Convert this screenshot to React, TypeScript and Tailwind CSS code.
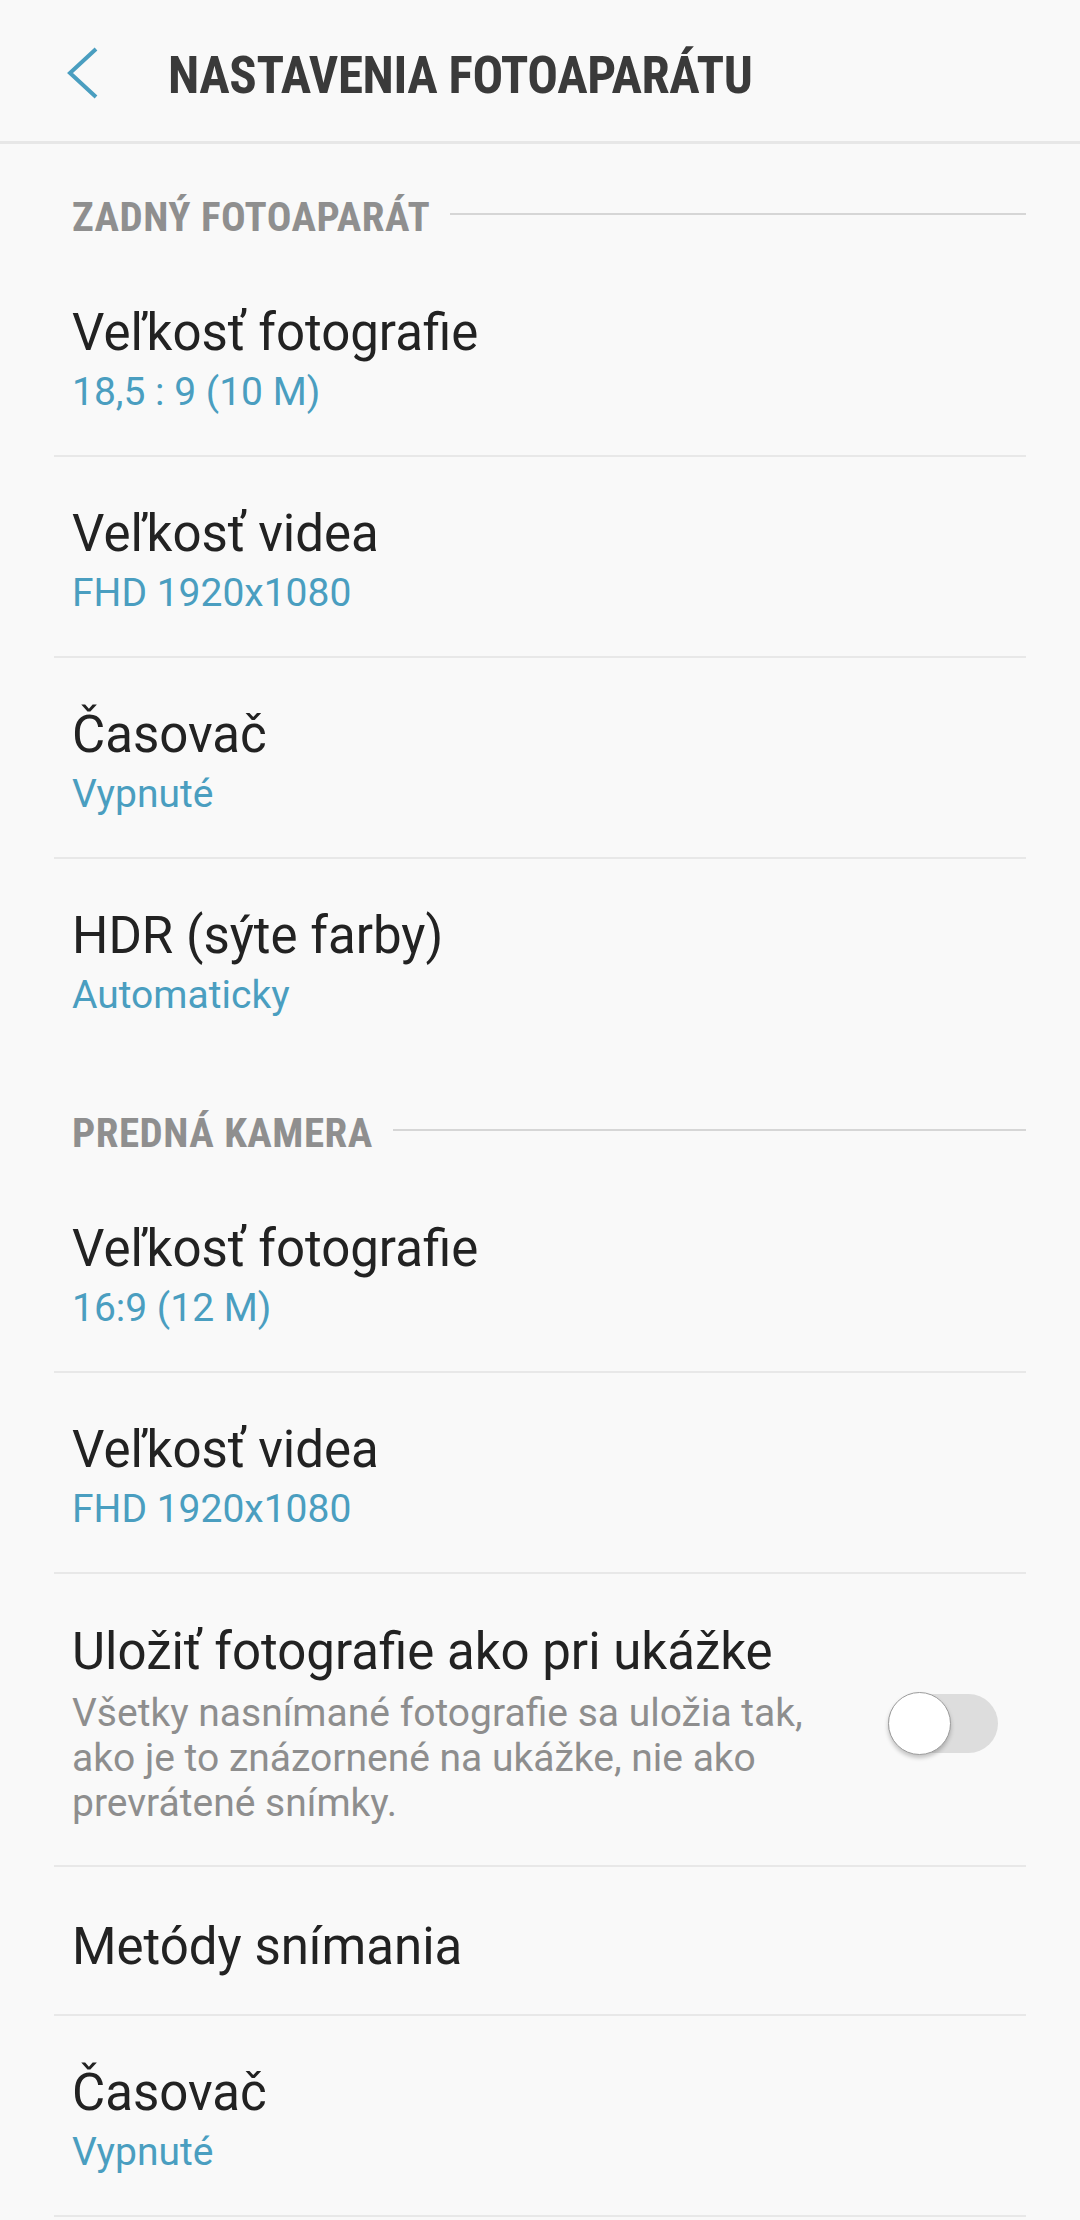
import React from "react";

type Row = { title: string; value?: string; desc?: string; toggle?: boolean; last?: boolean };

const REAR: Row[] = [
  { title: "Veľkosť fotografie", value: "18,5 : 9 (10 M)" },
  { title: "Veľkosť videa", value: "FHD 1920x1080" },
  { title: "Časovač", value: "Vypnuté" },
  { title: "HDR (sýte farby)", value: "Automaticky", last: true },
];

const FRONT: Row[] = [
  { title: "Veľkosť fotografie", value: "16:9 (12 M)" },
  { title: "Veľkosť videa", value: "FHD 1920x1080" },
  {
    title: "Uložiť fotografie ako pri ukážke",
    desc: "Všetky nasnímané fotografie sa uložia tak, ako je to znázornené na ukážke, nie ako prevrátené snímky.",
    toggle: true,
  },
  { title: "Metódy snímania" },
  { title: "Časovač", value: "Vypnuté" },
];

function SectionHeader({ label }: { label: string }) {
  return (
    <div className="flex items-start pt-[50px] pb-[15px] pl-[18px]">
      <span className="font-['Roboto_Condensed','Roboto',sans-serif] font-stretch-condensed text-[41px] leading-[47px] font-bold tracking-[0.5px] text-[#8f8f8f]">
        {label}
      </span>
      <div className="ml-[20px] mt-[19px] h-[2px] flex-1 bg-[#d6d6d6]" />
    </div>
  );
}

function Toggle() {
  return (
    <div className="relative mr-[28px] ml-[48px] h-[59px] w-[110px] shrink-0 rounded-full bg-[#dddddd]">
      <div className="absolute left-0 top-[-2px] h-[63px] w-[63px] rounded-full border-[1.5px] border-[#9c9c9c] bg-white shadow-[0_3px_4px_rgba(0,0,0,0.22)]" />
    </div>
  );
}

function Item({ row }: { row: Row }) {
  const border = row.last ? "border-transparent" : "border-[#e8e8e8]";
  if (row.toggle) {
    return (
      <div className={`flex items-center border-b-2 ${border} pt-[47px] pb-[39px] pl-[18px]`}>
        <div className="flex-1">
          <div className="text-[51px] leading-[61px] text-[#222222]">{row.title}</div>
          <div className="mt-[9px] text-[39px] leading-[45px] text-[#8e8e8e]">{row.desc}</div>
        </div>
        <Toggle />
      </div>
    );
  }
  if (!row.value) {
    return (
      <div className={`border-b-2 ${border} pt-[49px] pb-[37px] pl-[18px]`}>
        <div className="text-[51px] leading-[61px] text-[#222222]">{row.title}</div>
      </div>
    );
  }
  return (
    <div className={`border-b-2 ${border} pt-[46px] pb-[40px] pl-[18px]`}>
      <div className="text-[51px] leading-[61px] text-[#222222]">{row.title}</div>
      <div className="mt-[6px] text-[39px] leading-[46px] text-[#4a9ec0]">{row.value}</div>
    </div>
  );
}

export default function App() {
  return (
    <div className="min-h-[2220px] bg-[#f9f9f9] font-['Roboto',sans-serif]">
      {/* top bar */}
      <div className="flex h-[144px] items-center border-b-[3px] border-[#e7e7e7] pt-[4px]">
        <svg width="32" height="52" viewBox="0 0 32 52" className="ml-[66px] shrink-0" fill="none">
          <polyline points="30,2 4,26 30,50" stroke="#4a9ec0" strokeWidth="4" />
        </svg>
        <h1 className="ml-[70px] mt-[6px] font-['Roboto_Condensed','Roboto',sans-serif] font-stretch-condensed text-[51px] leading-[62px] font-bold tracking-[-0.4px] text-[#3a3a3a]">
          NASTAVENIA FOTOAPARÁTU
        </h1>
      </div>

      <div className="mx-[54px]">
        <SectionHeader label="ZADNÝ FOTOAPARÁT" />
        {REAR.map((r, i) => (
          <Item key={"r" + i} row={r} />
        ))}
        <SectionHeader label="PREDNÁ KAMERA" />
        {FRONT.map((r, i) => (
          <Item key={"f" + i} row={r} />
        ))}
      </div>
    </div>
  );
}
